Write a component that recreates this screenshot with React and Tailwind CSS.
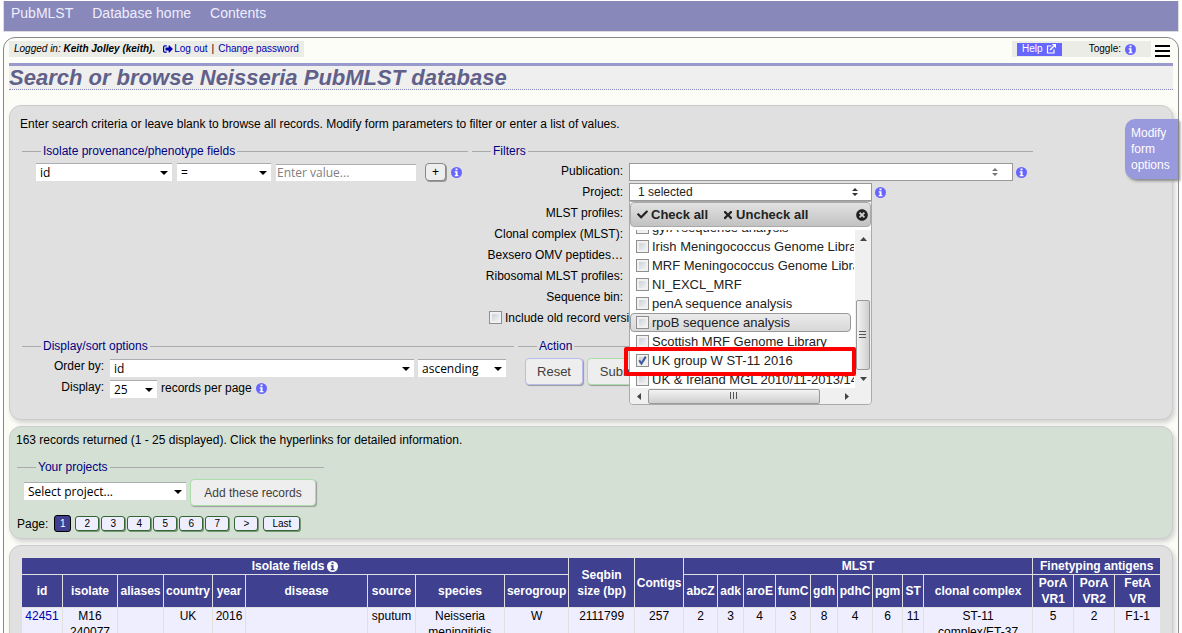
import React from "react";
import { FaCheck, FaSignOutAlt, FaTimes, FaTimesCircle } from "react-icons/fa";

const projects = [
  { name: "gyrA sequence analysis" },
  { name: "Irish Meningococcus Genome Library" },
  { name: "MRF Meningococcus Genome Library" },
  { name: "NI_EXCL_MRF" },
  { name: "penA sequence analysis" },
  { name: "rpoB sequence analysis", active: true },
  { name: "Scottish MRF Genome Library" },
  { name: "UK group W ST-11 2016", checked: true },
  { name: "UK & Ireland MGL 2010/11-2013/14" },
];

const filterLabels = [
  "MLST profiles:",
  "Clonal complex (MLST):",
  "Bexsero OMV peptides…",
  "Ribosomal MLST profiles:",
  "Sequence bin:",
];

const columnWidths = [
  "w-[40px]", "w-[54px]", "w-[45px]", "w-[48px]", "w-[32px]", "w-[121px]", "w-[47px]", "w-[88px]",
  "w-[63px]", "w-[65px]", "w-[48px]", "w-[33px]", "w-[25px]", "w-[31px]", "w-[34px]", "w-[26px]",
  "w-[34px]", "w-[29px]", "w-[20px]", "w-[108px]", "w-[40px]", "w-[40px]", "w-[45px]",
];

const subHeaders = [
  "id", "isolate", "aliases", "country", "year", "disease", "source", "species", "serogroup",
  "abcZ", "adk", "aroE", "fumC", "gdh", "pdhC", "pgm", "ST", "clonal complex",
  "PorA VR1", "PorA VR2", "FetA VR",
];

const clonalComplex = (
  <>
    ST-11 <span className="whitespace-nowrap">complex/ET-37</span> complex
  </>
);

const record = [
  "M16 240077", "", "UK", "2016", "", "sputum", "Neisseria meningitidis", "W", "2111799", "257",
  "2", "3", "4", "3", "8", "4", "6", "11", clonalComplex, "5", "2", "F1-1",
];

function InfoIcon({ disc, mark }) {
  return (
    <svg viewBox="0 0 11 11" className="size-[11px] shrink-0" aria-hidden="true">
      <circle cx="5.5" cy="5.5" r="5.5" fill={disc} />
      <path d="M4.500 1.500H6.500V3.200H4.500ZM3.700 4.200H6.500V8H7.400V9.200H3.700V8H4.600V5.400H3.700Z" fill={mark} />
    </svg>
  );
}

function Info({ label }) {
  return (
    <a href="#info" aria-label={label} className="shrink-0">
      <InfoIcon disc="#6666ff" mark="#ffffff" />
    </a>
  );
}

function Select({ label, id, options, className }) {
  return (
    <span className={"relative flex h-[18px] shrink-0 " + className}>
      <select
        id={id}
        aria-label={label}
        className="w-full appearance-none border-t border-[#abadb3] bg-white pl-1 pr-4 font-['Open_Sans',sans-serif] text-[12px] leading-[16px] text-black"
      >
        {options.map((o) => (
          <option key={o}>{o}</option>
        ))}
      </select>
      <svg viewBox="0 0 8 4" className="pointer-events-none absolute right-1 top-2 h-1 w-2" aria-hidden="true">
        <path d="M0 0H8L4 4Z" fill="#000" />
      </svg>
    </span>
  );
}

function Checkbox({ id, checked }) {
  return (
    <span className="grid size-[13px] shrink-0">
      <input
        id={id}
        type="checkbox"
        defaultChecked={checked}
        className="peer col-start-1 row-start-1 size-[13px] appearance-none border border-[#8e8f8f] bg-linear-to-br from-[#c4cad2] to-[#fafafa] shadow-[inset_0_0_0_2px_#f1f1f1]"
      />
      <svg
        viewBox="0 0 13 13"
        className="pointer-events-none invisible col-start-1 row-start-1 size-[13px] peer-checked:visible"
        aria-hidden="true"
      >
        <path d="M3.200 6.200L5.400 9.600L9.800 2.600" fill="none" stroke="#3f5a9d" strokeWidth="2" />
      </svg>
    </span>
  );
}

function Group({ title, className, children }) {
  return (
    <fieldset className={"border-t border-[#aaaaaa] " + className}>
      <legend className="ml-[19px] px-[2px] leading-[16px] text-[#000080]">{title}</legend>
      {children}
    </fieldset>
  );
}

function SortArrows({ color }) {
  return (
    <svg viewBox="0 0 6 8" className="h-2 w-[6px]" aria-hidden="true">
      <path d="M0 3H6L3 0ZM0 5H6L3 8Z" fill={color} />
    </svg>
  );
}

function ProjectMenu() {
  return (
    <div className="absolute left-0 top-full z-10 w-full rounded-b-[4px] border border-[#aaaaaa] bg-white text-[13px] text-[#222222]">
      <div className="flex h-[25px] items-center rounded-[4px] border border-[#aaaaaa] bg-linear-to-b from-[#e2e2e2] to-[#c2c2c2] pl-[6px] pr-[2px] font-bold">
        <button type="button" className="flex items-center gap-[3px]">
          <FaCheck className="size-[11px]" />
          Check all
        </button>
        <button type="button" className="ml-[14px] flex items-center gap-[2px]">
          <FaTimes className="size-[12px]" />
          Uncheck all
        </button>
        <button type="button" aria-label="Close" className="ml-auto">
          <FaTimesCircle className="size-[12px]" />
        </button>
      </div>
      <div className="mt-[3px] flex">
        <ul className="mr-px flex h-[158px] min-w-0 grow flex-col justify-end overflow-hidden">
          {projects.map((p, i) => (
            <li
              key={p.name}
              className={
                "mr-[3px] flex h-[19px] shrink-0 items-center gap-[3px] rounded-[4px] border pl-[5px] last:-mb-px " +
                (p.active ? "border-[#999999] bg-linear-to-b from-[#ebebeb] to-[#d8d8d8]" : "border-transparent")
              }
            >
              <Checkbox id={"project" + i} checked={p.checked} />
              <label htmlFor={"project" + i} className="whitespace-nowrap">
                {p.name}
              </label>
            </li>
          ))}
        </ul>
        <div className="flex w-[16px] shrink-0 flex-col items-center bg-[#f0f0f0]" aria-hidden="true">
          <svg viewBox="0 0 7 4" className="my-[7px] h-1 w-[7px] shrink-0">
            <path d="M0 4H7L3.500 0Z" fill="#444" />
          </svg>
          <div className="mt-auto flex h-[70px] w-[14px] items-center justify-center rounded-[2px] border border-[#999999] bg-linear-to-r from-[#f3f3f3] to-[#cfcfcf]">
            <svg viewBox="0 0 8 8" className="size-2">
              <path d="M0 .5H7M0 3.500H7M0 6.500H7" stroke="#555" />
            </svg>
          </div>
          <svg viewBox="0 0 7 4" className="my-[7px] h-1 w-[7px] shrink-0">
            <path d="M0 0H7L3.500 4Z" fill="#444" />
          </svg>
        </div>
      </div>
      <div className="flex h-[16px] items-center rounded-b-[4px] bg-[#f0f0f0] pr-[22px]" aria-hidden="true">
        <svg viewBox="0 0 4 7" className="mx-[7px] h-[7px] w-1 shrink-0">
          <path d="M4 0V7L0 3.500Z" fill="#444" />
        </svg>
        <div className="flex h-[15px] w-[172px] items-center justify-center rounded-[2px] border border-[#999999] bg-linear-to-b from-[#f3f3f3] to-[#cfcfcf]">
          <svg viewBox="0 0 8 8" className="size-2">
            <path d="M.5 0V7M3.500 0V7M6.500 0V7" stroke="#555" />
          </svg>
        </div>
        <svg viewBox="0 0 4 7" className="ml-auto h-[7px] w-1 shrink-0">
          <path d="M0 0V7L4 3.500Z" fill="#444" />
        </svg>
      </div>
      <div className="pointer-events-none absolute -left-[6px] right-[15px] top-[145px] h-[29px] rounded-[2px] border-4 border-[#ff0000]" />
    </div>
  );
}

function FilterRow({ label, children }) {
  return (
    <div className="flex h-[21px] items-center gap-[6px]">
      <span className="w-[151px] shrink-0 text-right">{label}</span>
      {children}
    </div>
  );
}

const boxShadow = "border border-[#cccccc] shadow-[2px_3px_5px_#d0d0d0]";
const actionButton = "h-[27px] rounded-[4px] border bg-[#eeeeee] text-[#404040] shadow-[1px_1px_1px_#999999] ";
const pageButton =
  "h-[15px] rounded-[3px] border border-[#336633] bg-[#eeeeff] text-[10px] leading-[13px] text-black shadow-[1px_1px_0_#779977] ";

function SearchForm() {
  return (
    <section className={"rounded-[12px] bg-[#e0e0e0] px-[12px] pb-[19px] pt-[10px] " + boxShadow}>
      <p className="-ml-[2px]">
        Enter search criteria or leave blank to browse all records. Modify form parameters to filter or enter a list of
        values.
      </p>
      <form className="mt-[11px]" onSubmit={(e) => e.preventDefault()}>
        <div className="flex items-start gap-1">
          <Group title="Isolate provenance/phenotype fields" className="w-[446px] pt-1">
            <div className="flex items-center pl-[14px]">
              <Select label="Field" options={["id"]} className="w-[136px]" />
              <Select label="Operator" options={["="]} className="ml-[5px] w-[94px]" />
              <input
                aria-label="Value"
                placeholder="Enter value..."
                className="ml-[5px] h-[17px] w-[140px] border-t border-[#abadb3] bg-white pl-px font-['Open_Sans',sans-serif] text-[12px] placeholder:text-[#808080]"
              />
              <button
                type="button"
                className="ml-[9px] flex h-[18px] w-[21px] items-center justify-center rounded-[4px] border border-[#888888] bg-[#eeeeee] text-[12px] shadow-[1px_1px_0_#999999]"
              >
                +
              </button>
              <span className="ml-[5px]">
                <Info label="Search field help" />
              </span>
            </div>
          </Group>
          <Group title="Filters" className="w-[561px] pt-px">
            <FilterRow label="Publication:">
              <button
                type="button"
                aria-label="Publication"
                className="mt-[3px] flex h-[18px] w-[384px] items-center justify-end border border-[#999999] bg-white pr-[14px]"
              >
                <SortArrows color="#777777" />
              </button>
              <span className="-ml-[3px] mt-[3px]">
                <Info label="Publication help" />
              </span>
            </FilterRow>
            <FilterRow label="Project:">
              <div className="relative mt-px w-[243px]">
                <button
                  type="button"
                  aria-expanded="true"
                  className="flex h-[18px] w-full items-center justify-between border border-[#999999] bg-white pl-2 pr-[13px] text-[12px] text-[#222222]"
                >
                  1 selected
                  <SortArrows color="#333333" />
                </button>
                <ProjectMenu />
              </div>
              <span className="-ml-[3px] mt-px">
                <Info label="Project help" />
              </span>
            </FilterRow>
            {filterLabels.map((label) => (
              <FilterRow key={label} label={label} />
            ))}
            <div className="flex h-[21px] items-center gap-[3px] pl-[17px]">
              <Checkbox id="oldVersions" />
              <label htmlFor="oldVersions">Include old record versions</label>
            </div>
          </Group>
        </div>
        <div className="mt-[10px] flex items-start gap-1">
          <Group title="Display/sort options" className="w-[492px] pt-1">
            <div className="flex h-[21px] items-start">
              <label htmlFor="orderBy" className="mr-[6px] w-[82px] text-right">
                Order by:
              </label>
              <Select id="orderBy" options={["id"]} className="mt-px w-[304px]" />
              <Select label="Direction" options={["ascending"]} className="ml-1 mt-px w-[88px]" />
            </div>
            <div className="flex h-[21px] items-start">
              <label htmlFor="display" className="mr-[6px] w-[82px] text-right">
                Display:
              </label>
              <Select id="display" options={["25"]} className="mt-px w-[47px]" />
              <span className="ml-1 mt-px flex items-center gap-1">
                records per page
                <Info label="Display help" />
              </span>
            </div>
          </Group>
          <Group title="Action" className="w-[160px] pt-1">
            <div className="flex gap-1 pl-[7px]">
              <button type="reset" className={actionButton + "w-[58px] border-[#bbbbee] text-[13px]"}>
                Reset
              </button>
              <button type="submit" className={actionButton + "w-[66px] border-[#aaddaa] text-[13px]"}>
                Submit
              </button>
            </div>
          </Group>
        </div>
      </form>
    </section>
  );
}

function ResultsHeader() {
  return (
    <section className={"rounded-[12px] bg-[#d5e0d5] px-[6px] pb-[6px] pt-[5px] " + boxShadow}>
      <p>163 records returned (1 - 25 displayed). Click the hyperlinks for detailed information.</p>
      <Group title="Your projects" className="ml-px mt-[11px] w-[307px] pt-1">
        <div className="flex items-start gap-1 pl-[7px]">
          <Select label="Project" options={["Select project..."]} className="mt-[3px] w-[162px]" />
          <button type="button" className={actionButton + "w-[126px] border-[#aaddaa] text-[12px]"}>
            Add these records
          </button>
        </div>
      </Group>
      <nav aria-label="Pages" className="ml-px mt-[9px] flex h-[17px] items-center gap-[2px]">
        <span className="mr-1">Page:</span>
        <span className="mr-[2px] flex h-[17px] w-[17px] items-center justify-center rounded-[3px] border border-black bg-[#404090] text-[10px] text-white">
          1
        </span>
        {["2", "3", "4", "5", "6", "7"].map((n) => (
          <button key={n} type="button" className={pageButton + "w-[24px]"}>
            {n}
          </button>
        ))}
        <button type="button" className={pageButton + "ml-[3px] w-[24px]"}>
          &gt;
        </button>
        <button type="button" className={pageButton + "ml-[3px] w-[37px]"}>
          Last
        </button>
      </nav>
    </section>
  );
}

function ResultsTable() {
  return (
    <section className={"rounded-[12px] bg-[#e0e0e0] p-[11px] " + boxShadow}>
      <table className="w-full table-fixed border-separate border-spacing-px text-center leading-[16px]">
        <colgroup>
          {columnWidths.map((w, i) => (
            <col key={i} className={w} />
          ))}
        </colgroup>
        <thead className="text-white [&_th]:bg-[#404090] [&_th]:p-0">
          <tr>
            <th colSpan={9}>
              <span className="flex items-center justify-center gap-[3px]">
                Isolate fields <InfoIcon disc="#ffffff" mark="#404090" />
              </span>
            </th>
            <th rowSpan={2}>Seqbin size (bp)</th>
            <th rowSpan={2}>Contigs</th>
            <th colSpan={9}>MLST</th>
            <th colSpan={3}>Finetyping antigens</th>
          </tr>
          <tr className="h-8">
            {subHeaders.map((h) => (
              <th key={h}>{h}</th>
            ))}
          </tr>
        </thead>
        <tbody className="[&_td]:bg-[#eeeeff] [&_td]:p-0 [&_td]:align-top">
          <tr>
            <td>
              <a href="#42451" className="text-[#0000b0]">
                42451
              </a>
            </td>
            {record.map((v, i) => (
              <td key={i}>{v}</td>
            ))}
          </tr>
        </tbody>
      </table>
    </section>
  );
}

export default function App() {
  return (
    <div className="h-screen overflow-y-auto bg-white pl-[3px] pr-[3px] pt-px font-['Liberation_Sans',Arial,sans-serif] text-[12px] leading-[16px] text-black [scrollbar-width:none]">
      <nav className="flex h-[31px] gap-[19px] border border-t-0 border-[#dddddd] bg-[#8888bb] pl-[7px] pt-[4px] text-[14px] text-[#eeeeff]">
        <a href="#pubmlst">PubMLST</a>
        <a href="#database">Database home</a>
        <a href="#contents">Contents</a>
      </nav>
      <div className="relative mt-[5px] rounded-t-[12px] border border-[#888888] bg-[#fdfdf8] px-[5px] pb-3 pt-[3px]">
        <header>
          <div className="flex h-[16px] text-[10px]">
            <div className="flex items-center gap-1 bg-[#ecece7] px-[5px]">
              <i>
                Logged in: <b>Keith Jolley (keith).</b>
              </i>
              <a href="#logout" className="ml-1 flex items-center gap-px text-[#0000b0]">
                <FaSignOutAlt className="size-[10px] shrink-0" />
                Log out
              </a>
              <span>|</span>
              <a href="#password" className="text-[#0000b0]">
                Change password
              </a>
            </div>
            <div className="ml-auto flex w-[139px] items-center bg-[#ecece7] pl-[5px]">
              <a href="#help" className="flex h-[13px] w-[45px] items-center gap-[3px] bg-[#6666ff] pl-[5px] text-white">
                Help
                <svg viewBox="0 0 10 10" className="size-[10px]" fill="none" stroke="#fff" aria-hidden="true">
                  <path d="M5.500 2H1.500V9H8V5.500" strokeWidth="1.200" />
                  <path d="M4 6L8 2" strokeWidth="1.500" />
                  <path d="M5.800 0H10V4.200Z" fill="#fff" stroke="none" />
                </svg>
              </a>
              <span className="ml-auto">Toggle:</span>
              <span className="ml-1 mr-[15px]">
                <Info label="Toggle tooltips" />
              </span>
            </div>
            <button type="button" aria-label="Menu" className="ml-1 mr-[3px] flex h-[16px] w-[15px] items-end">
              <svg viewBox="0 0 15 12" className="h-3 w-[15px]">
                <path d="M0 1H15M0 6H15M0 11H15" stroke="#000" strokeWidth="2" />
              </svg>
            </button>
          </div>
          <h1 className="mt-[6px] border-b border-t-3 border-b-[#8888bb] border-t-[#9999cc] bg-[#efefef] text-[22px] font-bold italic leading-[23px] text-[#606088] [border-bottom-style:dotted]">
            Search or browse Neisseria PubMLST database
          </h1>
        </header>
        <main className="mt-[15px] flex flex-col gap-[6px]">
          <SearchForm />
          <ResultsHeader />
          <ResultsTable />
        </main>
        <button
          type="button"
          className="absolute right-0 top-[81px] w-[53px] rounded-l-[10px] bg-[#9999dd] py-[6px] pl-[6px] text-left text-[12px] leading-[16px] text-white shadow-[2px_2px_3px_#888888]"
        >
          Modify form options
        </button>
      </div>
    </div>
  );
}
